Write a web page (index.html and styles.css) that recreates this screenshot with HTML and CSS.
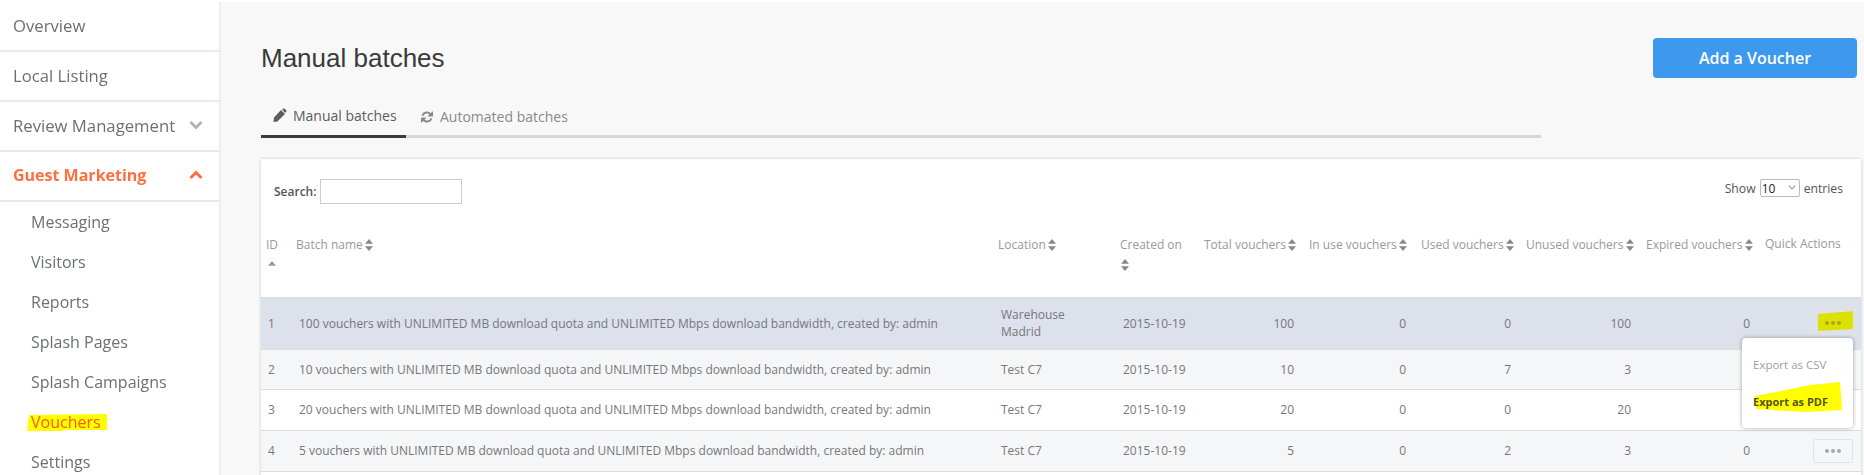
FILE: index.html
```html
<!DOCTYPE html>
<html lang="en">
<head>
<meta charset="utf-8">
<title>Manual batches</title>
<link rel="stylesheet" href="styles.css">
</head>
<body>
<svg class="defs" width="0" height="0" aria-hidden="true">
  <symbol id="sort" viewBox="0 0 8 12"><path d="M4 0 8 4.800H0ZM0 7.200h8L4 12Z"/></symbol>
  <symbol id="more" viewBox="0 0 16 4"><circle cx="2" cy="2" r="2"/><circle cx="8" cy="2" r="2"/><circle cx="14" cy="2" r="2"/></symbol>
</svg>
<div class="app">
  <nav class="sidebar">
    <a class="nav-item">Overview</a>
    <a class="nav-item">Local Listing</a>
    <a class="nav-item">Review Management
      <svg class="chev" viewBox="0 0 14 10"><path d="M1.500 2 7 7.500 12.500 2" /></svg>
    </a>
    <a class="nav-item active">Guest Marketing
      <svg class="chev" viewBox="0 0 14 10"><path d="M1.500 8 7 2.500 12.500 8" /></svg>
    </a>
    <div class="subnav">
      <a>Messaging</a>
      <a>Visitors</a>
      <a>Reports</a>
      <a>Splash Pages</a>
      <a>Splash Campaigns</a>
      <a class="current">Vouchers
        <svg class="mark mark-nav" viewBox="0 0 80 17" preserveAspectRatio="none"><path d="M2 1 80 0V16L36 16V17H0Z"/></svg>
      </a>
      <a>Settings</a>
    </div>
  </nav>
  <main class="main">
    <header class="head">
      <h1>Manual batches</h1>
      <button class="add">Add a Voucher</button>
    </header>
    <div class="tabs">
      <a class="tab on">
        <svg class="tab-ico" viewBox="0 0 14 14"><path d="M10.300.8a1 1 0 0 1 1.400 0l1.500 1.500a1 1 0 0 1 0 1.400l-1.300 1.300L9 1.100ZM8 2.100 11.900 6l-7.500 7.500L.5 14l.5-4.400Z"/></svg>
        Manual batches
      </a>
      <a class="tab">
        <svg class="tab-ico" viewBox="0 0 14 14"><path d="M7 1.500a5.500 5.500 0 0 1 3.800 1.500L12.300 1.500a.4.4 0 0 1 .7.300V6a.5.500 0 0 1-.5.500H8.300a.4.4 0 0 1-.3-.7L9.400 4.400A3.500 3.500 0 0 0 3.700 5.800H1.600A5.500 5.500 0 0 1 7 1.500ZM1.500 7.500h4.200a.4.4 0 0 1 .3.700L4.600 9.600a3.500 3.500 0 0 0 5.700-1.400h2.100a5.500 5.500 0 0 1-9.200 2.800L1.700 12.500a.4.4 0 0 1-.7-.3V8a.5.500 0 0 1 .5-.5Z"/></svg>
        Automated batches
      </a>
    </div>
    <section class="card">
      <div class="toolbar">
        <label class="search">Search: <input type="text"></label>
        <label class="length">Show
          <span class="select"><select><option>10</option></select><svg viewBox="0 0 8 5"><path d="M.8.8 4 4 7.200.8"/></svg></span>
          entries</label>
      </div>
      <table>
        <colgroup>
          <col class="c-id"><col class="c-name"><col class="c-loc"><col class="c-date"><col class="c-total"><col class="c-inuse"><col class="c-used"><col class="c-unused"><col class="c-exp"><col class="c-act">
        </colgroup>
        <thead>
          <tr>
            <th>ID <svg class="sort up" viewBox="0 0 8 5"><path d="M4 0 8 4.800H0Z"/></svg></th>
            <th>Batch name <svg class="sort"><use href="#sort"/></svg></th>
            <th>Location <svg class="sort"><use href="#sort"/></svg></th>
            <th class="wrap">Created on <svg class="sort"><use href="#sort"/></svg></th>
            <th>Total vouchers <svg class="sort"><use href="#sort"/></svg></th>
            <th>In use vouchers <svg class="sort"><use href="#sort"/></svg></th>
            <th>Used vouchers <svg class="sort"><use href="#sort"/></svg></th>
            <th>Unused vouchers <svg class="sort"><use href="#sort"/></svg></th>
            <th>Expired vouchers <svg class="sort"><use href="#sort"/></svg></th>
            <th class="qa">Quick Actions</th>
          </tr>
        </thead>
        <tbody>
          <tr class="sel">
            <td>1</td><td>100 vouchers with UNLIMITED MB download quota and UNLIMITED Mbps download bandwidth, created by: admin</td><td>Warehouse Madrid</td><td>2015-10-19</td><td class="n">100</td><td class="n">0</td><td class="n">0</td><td class="n">100</td><td class="n">0</td>
            <td class="act"><button class="more"><svg><use href="#more"/></svg></button></td>
          </tr>
          <tr class="odd short">
            <td>2</td><td>10 vouchers with UNLIMITED MB download quota and UNLIMITED Mbps download bandwidth, created by: admin</td><td>Test C7</td><td>2015-10-19</td><td class="n">10</td><td class="n">0</td><td class="n">7</td><td class="n">3</td><td class="n">0</td>
            <td class="act"></td>
          </tr>
          <tr>
            <td>3</td><td>20 vouchers with UNLIMITED MB download quota and UNLIMITED Mbps download bandwidth, created by: admin</td><td>Test C7</td><td>2015-10-19</td><td class="n">20</td><td class="n">0</td><td class="n">0</td><td class="n">20</td><td class="n">0</td>
            <td class="act"></td>
          </tr>
          <tr class="odd">
            <td>4</td><td>5 vouchers with UNLIMITED MB download quota and UNLIMITED Mbps download bandwidth, created by: admin</td><td>Test C7</td><td>2015-10-19</td><td class="n">5</td><td class="n">0</td><td class="n">2</td><td class="n">3</td><td class="n">0</td>
            <td class="act"><button class="more"><svg><use href="#more"/></svg></button></td>
          </tr>
        </tbody>
      </table>
      <svg class="mark mark-dots" viewBox="0 0 37 20" preserveAspectRatio="none"><path d="M2 3 37 0V18L2 20Z"/></svg>
      <div class="menu">
        <a>Export as CSV</a>
        <a class="pdf">Export as PDF</a>
        <svg class="mark mark-pdf" viewBox="0 0 90 30" preserveAspectRatio="none"><path d="M3 14 34 8 58 3 88 0 90 28 54 30 4 27Z"/></svg>
      </div>
    </section>
  </main>
</div>
</body>
</html>
```
FILE: styles.css
```css
* { box-sizing: border-box; }
html, body { margin: 0; height: 475px; overflow: hidden; background: #fff; }
body { font-family: "Open Sans", sans-serif; color: #777; }
.defs { position: absolute; }
.app { display: flex; height: 473px; margin-top: 2px; overflow: hidden; }

.sidebar { flex: 0 0 221px; background: #fff; border-right: 2px solid #eceef3; }
.nav-item { display: flex; align-items: center; justify-content: space-between; height: 50px; padding: 0 16px 2px 13px; border-bottom: 2px solid #e8eaf1; font-size: 16.700px; color: #6c6f78; white-space: nowrap; }
.nav-item .chev { width: 14px; height: 10px; fill: none; stroke: #b4b4b4; stroke-width: 3; }
.nav-item.active { color: #ff6e40; font-weight: 700; font-size: 16px; }
.nav-item.active .chev { stroke: #ff6e40; }
.subnav { display: flex; flex-direction: column; }
.subnav a { position: relative; display: block; height: 40px; line-height: 40px; padding-left: 31px; font-size: 16px; color: #6c6f78; }
.subnav a.current { color: #ff5a14; }

.mark { position: absolute; fill: #ffff00; mix-blend-mode: multiply; }
.mark-nav { left: 27px; top: 12px; width: 80px; height: 17px; }
.mark-dots { right: 8px; top: 152px; width: 37px; height: 20px; }
.mark-pdf { left: 10px; top: 44px; width: 90px; height: 30px; }

.main { flex: 1; min-width: 0; background: #f8f8f8; padding: 36px 7px 0 40px; position: relative; }
.head { display: flex; align-items: center; justify-content: space-between; height: 40px; }
h1 { margin: 0; font: 400 26px "Liberation Sans", Arial, sans-serif; color: #3a3a3a; }
.add { width: 204px; height: 40px; border: 0; border-radius: 4px; background: #3d99ee; color: #fff; font: 600 16px "Open Sans", sans-serif; }

.tabs { display: flex; width: 1280px; height: 40px; margin-top: 20px; border-bottom: 3px solid #d6d6d6; }
.tab { display: flex; align-items: center; gap: 6px; height: 40px; padding: 0 14px 0 13px; font-size: 14px; color: #8a8a8a; white-space: nowrap; }
.tab.on { width: 145px; padding-left: 12px; color: #5c5c5c; border-bottom: 3px solid #3a3a3a; padding-bottom: 3px; }
.tab:not(.on) { padding-bottom: 3px; margin-left: 1px; }
.tab-ico { flex: none; width: 14px; height: 14px; fill: currentColor; }

.card { position: relative; width: 1600px; margin-top: 21px; padding-bottom: 40px; background: #fff; box-shadow: 0 0 3px rgba(0,0,0,.2); }
.toolbar { display: flex; justify-content: space-between; align-items: flex-start; height: 73px; padding: 20px 18px 0 13px; font-size: 12px; color: #555; }
.search { display: flex; align-items: center; gap: 3px; font-weight: 600; }
.search input { width: 142px; height: 25px; border: 1px solid #ccc; background: #fff; }
.length { display: flex; align-items: center; gap: 4px; height: 18px; font-size: 12.200px; }
.select { position: relative; display: block; width: 40px; height: 18px; }
.select select { appearance: none; width: 40px; height: 18px; padding: 0 0 0 1px; border: 1px solid #bbb; border-radius: 2px; background: #fff; color: #222; font: 12px "Open Sans", sans-serif; }
.select svg { position: absolute; right: 4px; top: 6px; width: 8px; height: 5px; fill: none; stroke: #aaa; stroke-width: 1.300; pointer-events: none; }

table { width: 1600px; table-layout: fixed; border-collapse: collapse; font-size: 12px; }
.c-id { width: 30px; } .c-name { width: 702px; } .c-loc { width: 122px; } .c-date { width: 84px; }
.c-total { width: 105px; } .c-inuse { width: 112px; } .c-used { width: 105px; } .c-unused { width: 120px; }
.c-exp { width: 119px; } .c-act { width: 101px; }
thead tr { height: 65px; }
th { padding: 3px 0 0 5px; vertical-align: top; text-align: left; font-weight: 400; color: #999; line-height: 20px; white-space: nowrap; }
th:first-child { white-space: normal; }
th.wrap .sort { display: block; margin: 4px 0 0 1px; }
th.qa { padding-top: 2px; }
.sort { width: 8px; height: 12px; fill: #888; vertical-align: -2px; margin-left: -1px; }
.sort.up { display: block; height: 5px; margin: 6px 0 0 2px; fill: #999; }
tbody tr { height: 41px; border-top: 1px solid #ddd; border-bottom: 1px solid #ddd; }
tbody tr.sel { height: 52px; background: #dce1ec; }
tbody tr.short { height: 40px; }
tbody tr.odd { background: #f5f6f8; }
td { padding: 0 8px; color: #777; line-height: 17px; }
td:first-child { padding-left: 7px; }
td.n { text-align: right; padding-right: 10px; }
.more { display: flex; align-items: center; justify-content: center; width: 40px; height: 24px; margin-left: auto; padding: 0; border: 1px solid #e4e4e4; border-radius: 2px; background: transparent; }
.more svg { width: 16px; height: 4px; fill: #a8a8a8; }
td.act { padding: 0 8px 0 0; }

.menu { position: absolute; top: 179px; right: 8px; width: 111px; height: 90px; padding-top: 17px; background: #fff; border-radius: 4px; box-shadow: 0 0 4px rgba(0,0,0,.35); font-size: 11.500px; }
.menu a { display: block; height: 37px; line-height: 19px; padding-left: 11px; color: #a39c9c; }
.menu a.pdf { font-weight: 700; font-size: 11px; color: #555; }
```
